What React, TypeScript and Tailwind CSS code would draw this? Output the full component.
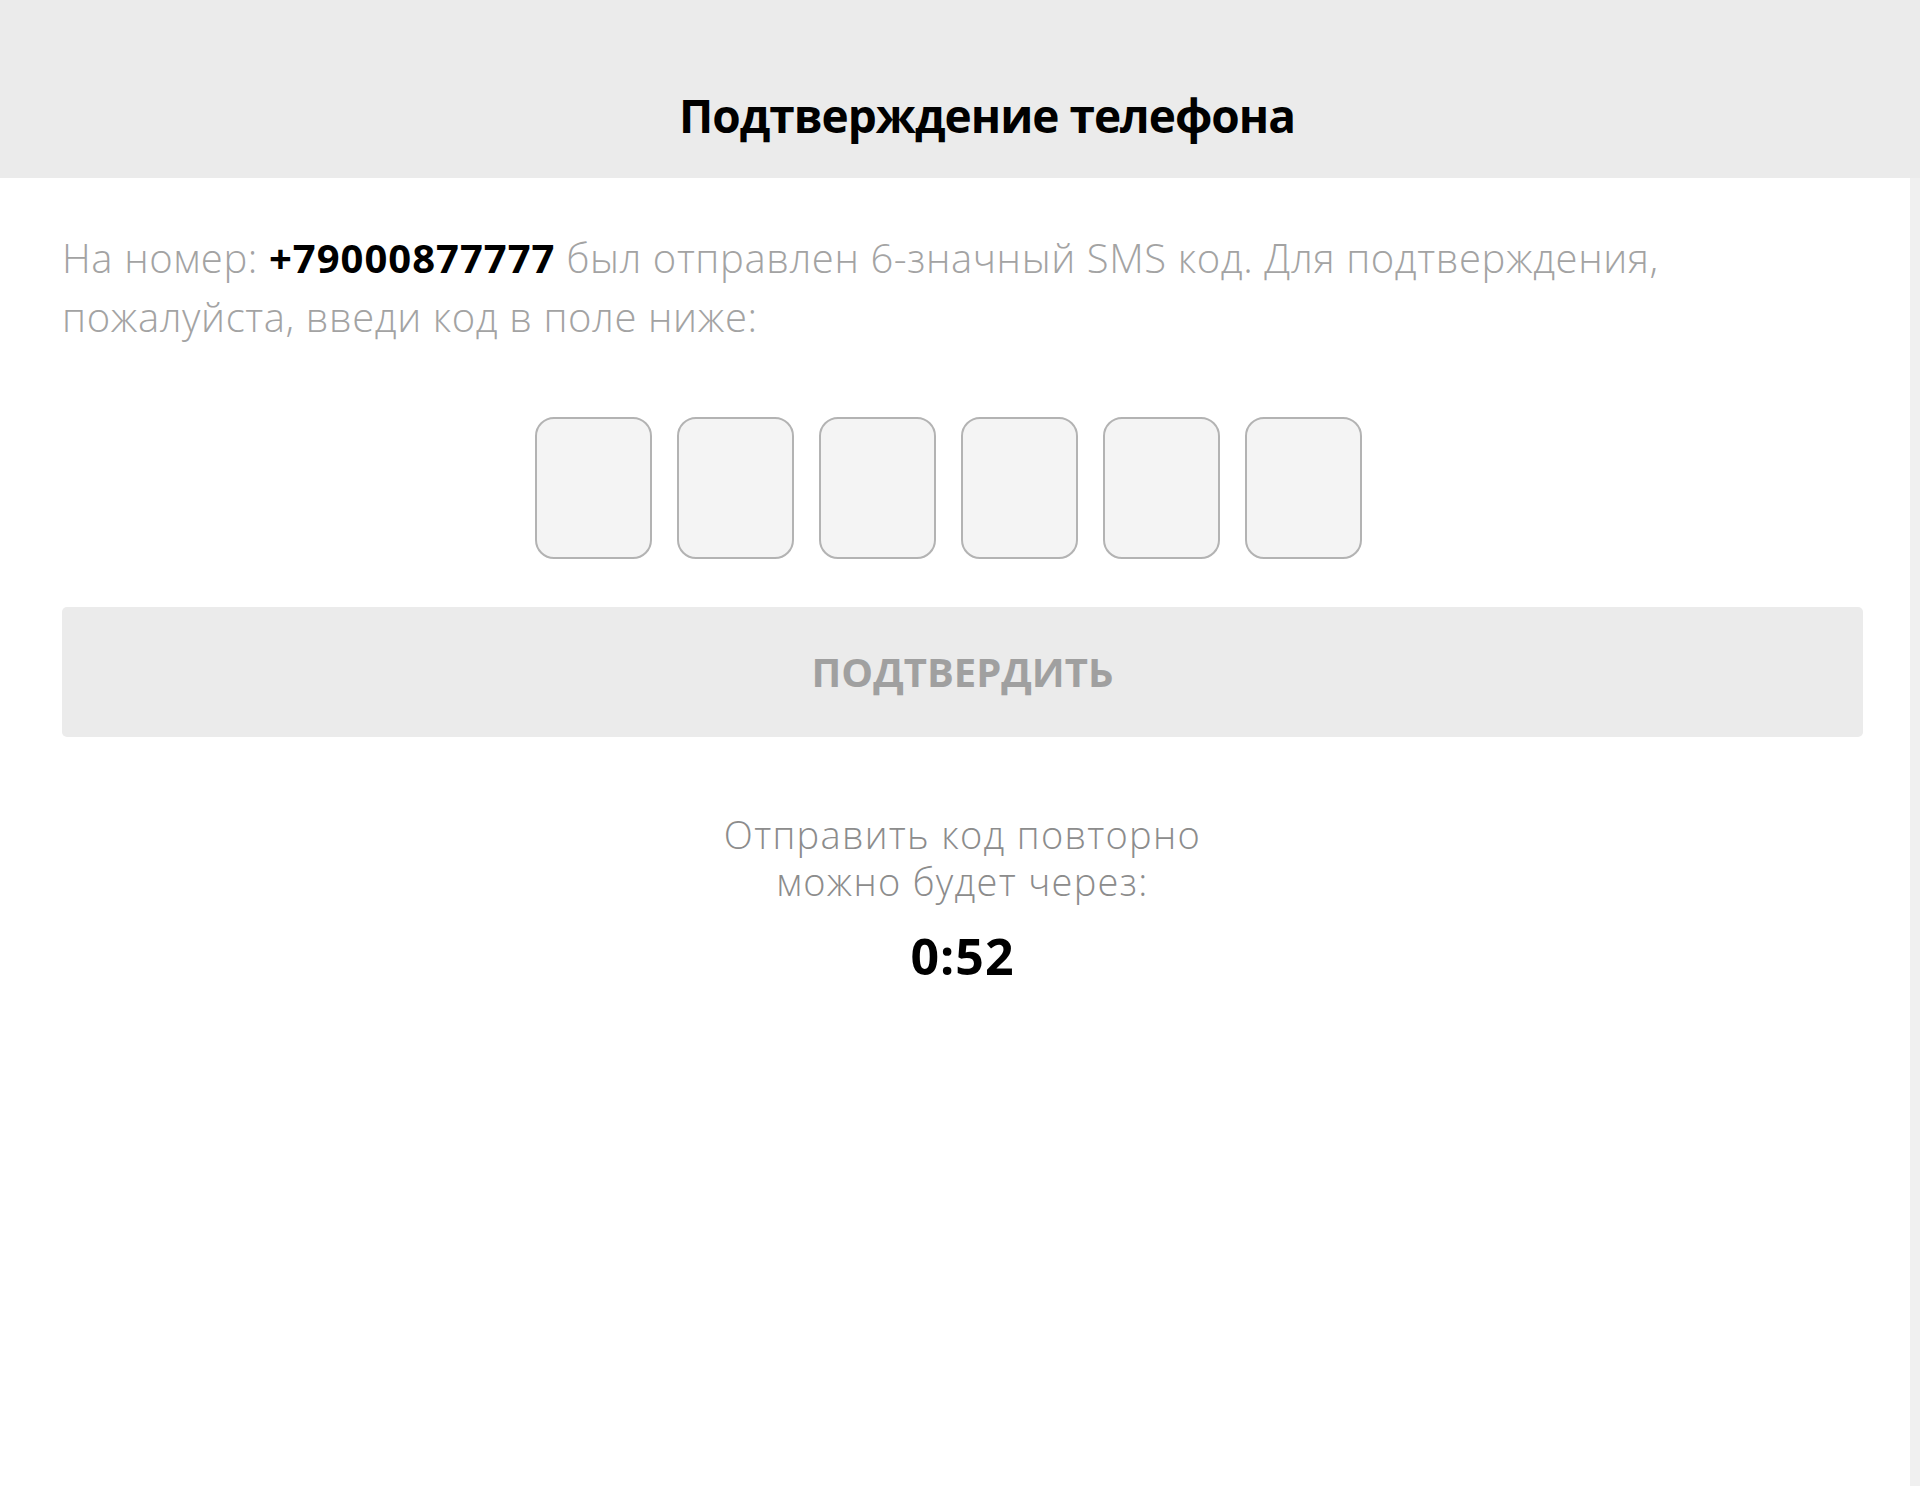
export default function App() {
  const cells = [0, 1, 2, 3, 4, 5];
  return (
    <div className="flex h-[1486px] w-full flex-col bg-white font-['Open_Sans',sans-serif]">
      <header className="h-[178px] shrink-0 bg-[#ebebeb] pl-[54px] pt-[87px] text-center">
        <h1 className="text-[46px] font-bold leading-[56px] tracking-[-1px] text-black">Подтверждение телефона</h1>
      </header>
      <div className="flex flex-1">
        <main className="flex-1 pl-[62px] pr-[47px] pt-[50px]">
          <p className="text-[40px] font-light leading-[59px] tracking-[0.6px] text-[#a3a3a3]">
            На номер: <span className="font-bold tracking-[1px] text-black">+79000877777</span> был отправлен 6-значный
            SMS код. Для подтверждения, пожалуйста, введи код в поле ниже:
          </p>

          <div className="mt-[71px] flex justify-center gap-[25px] pr-[28px]">
            {cells.map((i) => (
              <input
                key={i}
                type="text"
                maxLength={1}
                className="h-[142px] w-[117px] rounded-[19px] border-2 border-[#b3b3b3] bg-[#f4f4f4] text-center text-[48px] outline-none"
              />
            ))}
          </div>

          <button
            type="button"
            disabled
            className="mt-[48px] block h-[130px] w-full rounded-[5px] bg-[#ebebeb] text-[40px] font-bold uppercase leading-none text-[#a0a0a0]"
          >
            Подтвердить
          </button>

          <p className="mt-[74px] text-center text-[38px] font-light leading-[47px] tracking-[1.3px] text-[#8c8c8c]">
            Отправить код повторно
            <br />
            можно будет через:
          </p>
          <p className="mt-[23px] text-center text-[50px] font-bold leading-[56px] tracking-[1px] text-black">0:52</p>
        </main>
        <aside className="w-[10px] shrink-0 bg-[#f0f0f0]" />
      </div>
    </div>
  );
}
